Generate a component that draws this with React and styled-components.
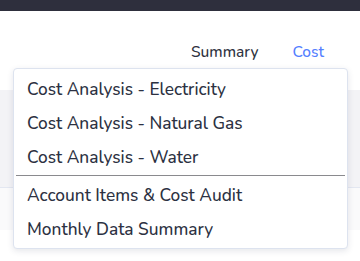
import React from 'react';
import styled, { createGlobalStyle } from 'styled-components';

const GlobalStyle = createGlobalStyle`
	html, body {
		margin: 0;
		padding: 0;
		background: #ffffff;
		font-family: 'Nunito', 'Lato', 'Open Sans', sans-serif;
	}
`;

const Page = styled.div`
	width: 360px;
	height: 261px;
	overflow: hidden;
	display: flex;
	flex-direction: column;
`;

const TopBar = styled.div`
	height: 11px;
	background: #2e2f3d;
`;

const Header = styled.div`
	position: relative;
	height: 79px;
	display: flex;
	justify-content: flex-end;
	align-items: flex-start;
	padding-right: 36px;
	box-sizing: border-box;
`;

const Nav = styled.nav`
	display: flex;
	gap: 34px;
	margin-top: 30px;
`;

const NavItem = styled.span`
	font-size: 15.5px;
	font-weight: 500;
	line-height: 22px;
	color: ${(p) => (p.active ? '#5580ff' : '#2f3341')};
`;

const Band = styled.div`
	height: 97px;
	background: #f3f3f6;
	border-bottom: 1px solid #e3e7f1;
`;

const LightBand = styled.div`
	height: 42px;
	background: #fafafb;
`;

const Menu = styled.div`
	position: absolute;
	top: 57px;
	left: 13px;
	right: 12px;
	background: #ffffff;
	border: 1px solid #dde3ef;
	border-radius: 4px;
	box-shadow: 0 2px 6px rgba(40, 50, 80, 0.12);
	padding: 3px 0 2px;
	z-index: 10;
`;

const MenuItem = styled.div`
	height: 34px;
	display: flex;
	align-items: center;
	padding: 0 13px;
	font-size: 17.3px;
	font-weight: 500;
	color: #2c3142;
	white-space: nowrap;
`;

const Divider = styled.hr`
	margin: 1px 2px 2px;
	border: none;
	border-top: 1px solid #8a8a8e;
`;

const items = [
	['Cost Analysis - Electricity', 'Cost Analysis - Natural Gas', 'Cost Analysis - Water'],
	['Account Items & Cost Audit', 'Monthly Data Summary'],
];

const App = () => {
	return (
		<Page>
			<GlobalStyle />
			<TopBar />
			<Header>
				<Nav>
					<NavItem>Summary</NavItem>
					<NavItem active>Cost</NavItem>
				</Nav>
				<Menu>
					{items.map((group, gi) => (
						<React.Fragment key={gi}>
							{gi > 0 && <Divider />}
							{group.map((label) => (
								<MenuItem key={label}>{label}</MenuItem>
							))}
						</React.Fragment>
					))}
				</Menu>
			</Header>
			<Band />
			<LightBand />
		</Page>
	);
};

export default App;
